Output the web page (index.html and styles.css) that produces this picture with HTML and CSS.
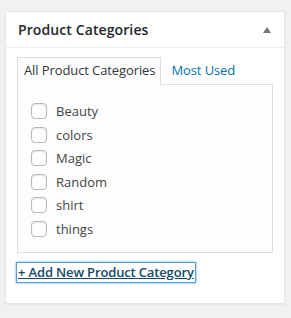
FILE: index.html
```html
<html lang="en">

<head>
    <meta charset="UTF-8">
    <meta name="viewport" content="width=device-width, initial-scale=1.0">
    <title>Product Categories</title>
    <link rel="stylesheet" href="styles.css">
</head>

<body>
    <div class="postbox">
        <div class="hndle">
            <h2>Product Categories</h2>
            <span class="toggle"></span>
        </div>

        <div class="inside">
            <ul class="category-tabs">
                <li class="tab active">All Product Categories</li>
                <li class="tab"><a href="#">Most Used</a></li>
            </ul>

            <div class="tabs-panel">
                <ul class="checklist">
                    <li><span class="check"></span>Beauty</li>
                    <li><span class="check"></span>colors</li>
                    <li><span class="check"></span>Magic</li>
                    <li><span class="check"></span>Random</li>
                    <li><span class="check"></span>shirt</li>
                    <li><span class="check"></span>things</li>
                </ul>
            </div>

            <div class="adder">
                <a href="#" class="add-link">+ Add New Product Category</a>
            </div>
        </div>
    </div>
</body>

</html>
```

FILE: styles.css
```css
body {
    margin: 0;
    padding: 11px 6px 0 5px;
    background: #f1f1f1;
    font-family: 'Open Sans', sans-serif;
    font-size: 13px;
    color: #32373c;
}

.postbox {
    width: 280px;
    height: 293px;
    box-sizing: border-box;
    background: #fff;
    border: 1px solid #e5e5e5;
    box-shadow: 0 1px 1px rgba(0, 0, 0, 0.04);
}

.hndle {
    display: flex;
    align-items: center;
    justify-content: space-between;
    height: 35px;
    padding: 0 12px;
    border-bottom: 1px solid #eee;
}

.hndle h2 {
    margin: 0;
    font-size: 14px;
    font-weight: 600;
    color: #23282d;
    line-height: 20px;
    letter-spacing: 0.1px;
}

.toggle {
    width: 0;
    height: 0;
    margin-right: 1px;
    border-left: 4px solid transparent;
    border-right: 4px solid transparent;
    border-bottom: 6px solid #72777c;
}

.inside {
    padding: 9px 11px 0 11px;
}

.category-tabs {
    display: flex;
    margin: 0;
    padding: 0;
    list-style: none;
}

.tab {
    padding: 3px 5px 4px 6px;
    line-height: 19px;
    border: 1px solid transparent;
    border-bottom: 0;
    margin-right: 3px;
    letter-spacing: -0.1px;
}

.tab.active {
    background: #fdfdfd;
    border-color: #ddd;
    position: relative;
    margin-bottom: -1px;
    padding-bottom: 5px;
}

.tab a {
    color: #0073aa;
    text-decoration: none;
}

.tabs-panel {
    height: 169px;
    box-sizing: border-box;
    background: #fdfdfd;
    border: 1px solid #ddd;
    padding: 18px 13px 0 13px;
}

.checklist {
    margin: 0;
    padding: 0;
    list-style: none;
    display: flex;
    flex-direction: column;
    gap: 7.5px;
}

.checklist li {
    display: flex;
    align-items: center;
    height: 16px;
    line-height: 16px;
    color: #444;
}

.check {
    width: 16px;
    height: 16px;
    box-sizing: border-box;
    margin-right: 9px;
    border: 1px solid #b4b9be;
    border-radius: 4px;
    background: #fff;
    box-shadow: inset 0 1px 2px rgba(0, 0, 0, 0.1);
}

.adder {
    margin-top: 10px;
}

.add-link {
    display: inline-block;
    padding: 0 1px;
    line-height: 19px;
    font-weight: 600;
    letter-spacing: -0.15px;
    color: #124964;
    text-decoration: underline;
    box-shadow: 0 0 0 1px #5b9dd9, 0 0 2px 1px rgba(30, 140, 190, 0.8);
}
```
